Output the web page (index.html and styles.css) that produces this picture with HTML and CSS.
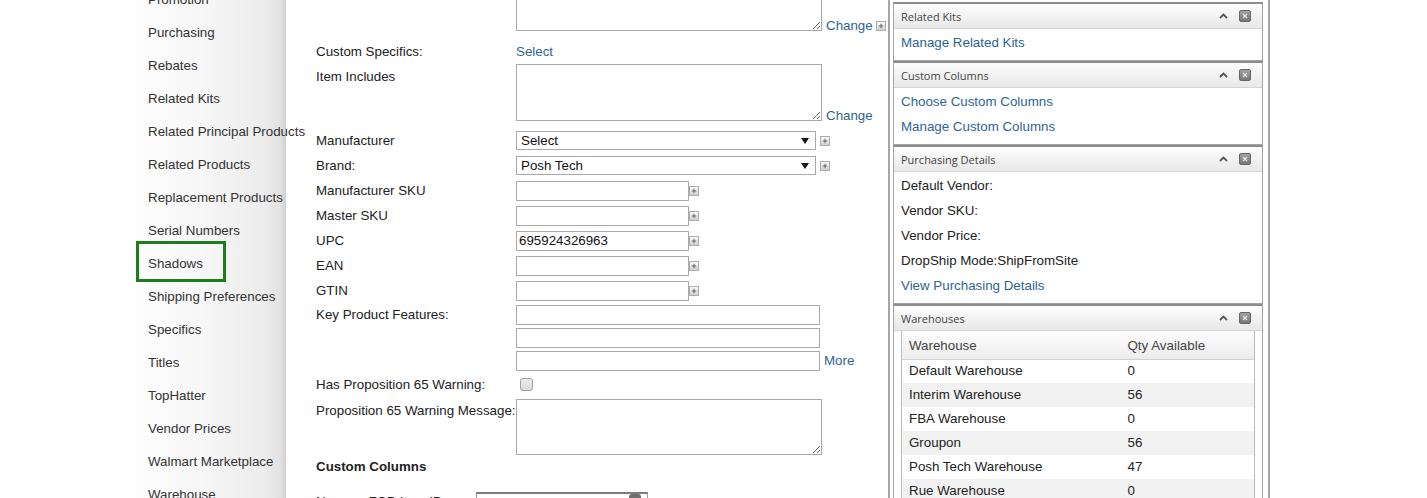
FILE: index.html
```html
<!DOCTYPE html>
<html>
<head>
<meta charset="utf-8">
<title>Product</title>
<link rel="stylesheet" href="styles.css">
</head>
<body>
<div class="page">
  <nav class="sidebar">
    <ul class="nav">
      <li><a>Promotion</a></li>
      <li><a>Purchasing</a></li>
      <li><a>Rebates</a></li>
      <li><a>Related Kits</a></li>
      <li><a>Related Principal Products</a></li>
      <li><a>Related Products</a></li>
      <li><a>Replacement Products</a></li>
      <li><a>Serial Numbers</a></li>
      <li><a class="selected">Shadows</a></li>
      <li><a>Shipping Preferences</a></li>
      <li><a>Specifics</a></li>
      <li><a>Titles</a></li>
      <li><a>TopHatter</a></li>
      <li><a>Vendor Prices</a></li>
      <li><a>Walmart Marketplace</a></li>
      <li><a>Warehouse</a></li>
    </ul>
  </nav>

  <main class="main">
    <div class="form">
      <div class="row row-ta row-first">
        <span class="label"></span>
        <textarea class="ta"></textarea>
        <a class="link chg">Change</a>
        <span class="plus plus-chg"><svg width="9" height="9" viewBox="0 0 9 9"><path d="M4.5 2v5M2 4.5h5" stroke="#555" stroke-width="1"/></svg></span>
      </div>
      <div class="row row-line">
        <span class="label">Custom Specifics:</span>
        <a class="link">Select</a>
      </div>
      <div class="row row-ta row-inc">
        <span class="label lbl-ta">Item Includes</span>
        <textarea class="ta"></textarea>
        <a class="link chg">Change</a>
      </div>
      <div class="row row-s">
        <span class="label">Manufacturer</span>
        <div class="sel"><span>Select</span><svg width="8" height="6" viewBox="0 0 8 6"><path d="M0 0h8L4 6z" fill="#111"/></svg></div>
        <span class="plus plus-sel"><svg width="9" height="9" viewBox="0 0 9 9"><path d="M4.5 2v5M2 4.5h5" stroke="#555" stroke-width="1"/></svg></span>
      </div>
      <div class="row row-s">
        <span class="label">Brand:</span>
        <div class="sel"><span>Posh Tech</span><svg width="8" height="6" viewBox="0 0 8 6"><path d="M0 0h8L4 6z" fill="#111"/></svg></div>
        <span class="plus plus-sel"><svg width="9" height="9" viewBox="0 0 9 9"><path d="M4.5 2v5M2 4.5h5" stroke="#555" stroke-width="1"/></svg></span>
      </div>
      <div class="row row-s">
        <span class="label">Manufacturer SKU</span>
        <input class="in" type="text" value="">
        <span class="plus"><svg width="9" height="9" viewBox="0 0 9 9"><path d="M4.5 2v5M2 4.5h5" stroke="#555" stroke-width="1"/></svg></span>
      </div>
      <div class="row row-s">
        <span class="label">Master SKU</span>
        <input class="in" type="text" value="">
        <span class="plus"><svg width="9" height="9" viewBox="0 0 9 9"><path d="M4.5 2v5M2 4.5h5" stroke="#555" stroke-width="1"/></svg></span>
      </div>
      <div class="row row-s">
        <span class="label">UPC</span>
        <input class="in" type="text" value="695924326963">
        <span class="plus"><svg width="9" height="9" viewBox="0 0 9 9"><path d="M4.5 2v5M2 4.5h5" stroke="#555" stroke-width="1"/></svg></span>
      </div>
      <div class="row row-s">
        <span class="label">EAN</span>
        <input class="in" type="text" value="">
        <span class="plus"><svg width="9" height="9" viewBox="0 0 9 9"><path d="M4.5 2v5M2 4.5h5" stroke="#555" stroke-width="1"/></svg></span>
      </div>
      <div class="row row-s">
        <span class="label">GTIN</span>
        <input class="in" type="text" value="">
        <span class="plus"><svg width="9" height="9" viewBox="0 0 9 9"><path d="M4.5 2v5M2 4.5h5" stroke="#555" stroke-width="1"/></svg></span>
      </div>
      <div class="row row-kf">
        <span class="label lbl-kf">Key Product Features:</span>
        <div class="stack">
          <input class="in in-wide" type="text" value="">
          <input class="in in-wide" type="text" value="">
          <input class="in in-wide" type="text" value="">
        </div>
        <a class="link more">More</a>
      </div>
      <div class="row row-cb">
        <span class="label">Has Proposition 65 Warning:</span>
        <input class="cb" type="checkbox">
      </div>
      <div class="row row-ta row-msg">
        <span class="label lbl-ta">Proposition 65 Warning Message:</span>
        <textarea class="ta ta-msg"></textarea>
      </div>
      <h3 class="heading">Custom Columns</h3>
      <div class="row row-cc">
        <span class="label lbl-cc">Newegg FOB Item ID:</span>
        <div class="combo"><span>1010000400</span><span class="combo-btn"></span></div>
      </div>
    </div>
  </main>

  <aside class="rightcol">
    <section class="panel">
      <header class="phead">
        <span class="ptitle">Related Kits</span>
        <svg class="caret" width="9" height="6" viewBox="0 0 9 6"><path d="M1 5L4.5 1.5L8 5" fill="none" stroke="#555" stroke-width="1.8"/></svg>
        <span class="close"><svg width="10" height="10" viewBox="0 0 10 10"><path d="M3 3l4 4M7 3l-4 4" stroke="#e6e6e6" stroke-width="1.2"/></svg></span>
      </header>
      <div class="pbody">
        <a class="link pline">Manage Related Kits</a>
      </div>
    </section>
    <section class="panel">
      <header class="phead">
        <span class="ptitle">Custom Columns</span>
        <svg class="caret" width="9" height="6" viewBox="0 0 9 6"><path d="M1 5L4.5 1.5L8 5" fill="none" stroke="#555" stroke-width="1.8"/></svg>
        <span class="close"><svg width="10" height="10" viewBox="0 0 10 10"><path d="M3 3l4 4M7 3l-4 4" stroke="#e6e6e6" stroke-width="1.2"/></svg></span>
      </header>
      <div class="pbody">
        <a class="link pline">Choose Custom Columns</a>
        <a class="link pline">Manage Custom Columns</a>
      </div>
    </section>
    <section class="panel">
      <header class="phead">
        <span class="ptitle">Purchasing Details</span>
        <svg class="caret" width="9" height="6" viewBox="0 0 9 6"><path d="M1 5L4.5 1.5L8 5" fill="none" stroke="#555" stroke-width="1.8"/></svg>
        <span class="close"><svg width="10" height="10" viewBox="0 0 10 10"><path d="M3 3l4 4M7 3l-4 4" stroke="#e6e6e6" stroke-width="1.2"/></svg></span>
      </header>
      <div class="pbody">
        <div class="pline">Default Vendor:</div>
        <div class="pline">Vendor SKU:</div>
        <div class="pline">Vendor Price:</div>
        <div class="pline">DropShip Mode:ShipFromSite</div>
        <a class="link pline">View Purchasing Details</a>
      </div>
    </section>
    <section class="panel">
      <header class="phead">
        <span class="ptitle">Warehouses</span>
        <svg class="caret" width="9" height="6" viewBox="0 0 9 6"><path d="M1 5L4.5 1.5L8 5" fill="none" stroke="#555" stroke-width="1.8"/></svg>
        <span class="close"><svg width="10" height="10" viewBox="0 0 10 10"><path d="M3 3l4 4M7 3l-4 4" stroke="#e6e6e6" stroke-width="1.2"/></svg></span>
      </header>
      <div class="pbody pbody-table">
        <table class="wh">
          <colgroup><col class="c1"><col></colgroup>
          <thead><tr><th>Warehouse</th><th>Qty Available</th></tr></thead>
          <tbody>
            <tr><td>Default Warehouse</td><td>0</td></tr>
            <tr><td>Interim Warehouse</td><td>56</td></tr>
            <tr><td>FBA Warehouse</td><td>0</td></tr>
            <tr><td>Groupon</td><td>56</td></tr>
            <tr><td>Posh Tech Warehouse</td><td>47</td></tr>
            <tr><td>Rue Warehouse</td><td>0</td></tr>
          </tbody>
        </table>
      </div>
    </section>
  </aside>
</div>
</body>
</html>
```

FILE: styles.css
```css
* { box-sizing: border-box; }
html, body { margin: 0; padding: 0; }
body {
  width: 1427px;
  height: 498px;
  overflow: hidden;
  background: #fff;
  font-family: "Liberation Sans", Arial, sans-serif;
  font-size: 13.33px;
  color: #222;
}
.page { display: flex; height: 498px; overflow: hidden; }

/* sidebar */
.sidebar {
  width: 286px;
  flex: none;
  position: relative;
  z-index: 1;
  background: linear-gradient(to right, #fff 0, #fff 120px, #f7f7f7 200px, #ededed 262px, #e2e2e2 280px, #d0d0d0 286px);
}
.nav { list-style: none; margin: -17px 0 0; padding: 0 0 0 139px; }
.nav li { height: 33px; line-height: 33px; white-space: nowrap; }
.nav a { display: inline-block; padding: 0 9px; color: #333; text-decoration: none; vertical-align: top; }
.nav a.selected {
  width: 84px;
  height: 35px;
  margin-top: -3px;
  padding-top: 3px;
  line-height: 33px;
  outline: 3px solid #1b7d1b;
}

/* main form */
.main {
  width: 604px;
  flex: none;
  border-right: 2px solid #a6a6a6;
  background: #fff;
  padding-left: 30px;
  overflow: hidden;
}
.form { margin-top: -26px; }
.row { display: flex; align-items: center; }
.label { width: 200px; flex: none; line-height: 20px; white-space: nowrap; color: #222; }
.link { color: #2f6496; text-decoration: none; cursor: pointer; }

.row-ta { align-items: flex-start; }
.row-first { margin-bottom: 11px; }
.row-line { height: 20px; line-height: 20px; margin-bottom: 2px; }
.row-inc { margin-bottom: 7px; }
.lbl-ta { padding-top: 2px; }
.row-inc .lbl-ta { padding-top: 3px; }
.ta {
  display: block;
  width: 306px;
  height: 57px;
  margin: 0;
  padding: 2px;
  border: 1px solid #a9a9a9;
  font: inherit;
  resize: both;
  background: #fff;
}
.chg { align-self: flex-end; margin-left: 4px; line-height: 16px; margin-bottom: -3px; }

.plus {
  display: inline-flex;
  align-items: center;
  justify-content: center;
  width: 10px;
  height: 10px;
  flex: none;
  border: 1px solid #adadad;
  background: linear-gradient(#fbfbfb, #cfcfcf);
}
.plus svg { display: block; width: 8px; height: 8px; }
.plus-chg { align-self: flex-end; margin-left: 3px; margin-bottom: 0; }
.plus-sel { margin-left: 4px; }

.row-s { height: 25px; }
.sel {
  width: 300px;
  height: 19px;
  border: 1px solid #a9a9a9;
  display: flex;
  align-items: center;
  justify-content: space-between;
  padding: 0 6px 0 4px;
  color: #111;
  background: #fff;
}
.sel svg { display: block; }
.in {
  width: 173px;
  height: 20px;
  margin: 0;
  padding: 0 2px;
  border: 1px solid #a9a9a9;
  font: inherit;
  color: #111;
  background: #fff;
  outline: none;
}

.row-kf { align-items: flex-start; }
.lbl-kf { margin-top: 2px; }
.stack { display: flex; flex-direction: column; gap: 3px; margin-top: 2px; }
.in-wide { width: 304px; }
.more { align-self: flex-end; margin-left: 4px; line-height: 20px; }

.row-cb { height: 25px; margin-top: 1px; }
.cb {
  -webkit-appearance: none;
  appearance: none;
  width: 13px;
  height: 13px;
  margin: -1px 0 0 4px;
  border: 1px solid #a3a3a3;
  border-radius: 3px;
  background: linear-gradient(#ececec, #d9d9d9);
}

.row-msg { margin-top: 2px; }
.ta-msg { height: 56px; }

.heading { margin: 2px 0 0; font-size: 13.33px; font-weight: bold; line-height: 20px; color: #222; }

.row-cc { margin-top: 15px; align-items: flex-start; }
.lbl-cc { width: 160px; }
.combo {
  width: 172px;
  height: 22px;
  border: 1px solid #9a9a9a;
  border-top: 2px solid #7d7d7d;
  display: flex;
  justify-content: space-between;
  padding: 0 6px 0 3px;
  line-height: 18px;
  color: #111;
}
.combo-btn { width: 12px; height: 14px; border-radius: 3px; background: #6f6f6f; }

/* right column */
.rightcol {
  width: 380px;
  flex: none;
  padding: 2px 5px 0 3px;
  border-right: 2px solid #a6a6a6;
  background: #fff;
}
.panel {
  border: 1px solid #a3a3a3;
  border-top: 2px solid #8d8d8d;
  background: #fff;
}
.phead {
  height: 25px;
  display: flex;
  align-items: center;
  padding: 0 11px 0 7px;
  border-bottom: 1px solid #d6d6d6;
  background: linear-gradient(#fdfdfd, #e8e8e8);
  font-family: "Open Sans", "Liberation Sans", sans-serif;
  font-size: 11px;
  color: #444;
}
.ptitle { flex: 1; }
.caret { display: block; margin-right: 11px; margin-top: -1px; }
.close {
  width: 12px;
  height: 12px;
  border: 1px solid #666;
  border-radius: 2px;
  background: linear-gradient(#a2a2a2, #777);
  display: flex;
  align-items: center;
  justify-content: center;
}
.close svg { display: block; }
.pbody { padding: 1px 7px 5px; line-height: 25px; }
.pline { display: block; color: #222; }
a.pline { color: #2f6496; }
.pbody-table { padding: 0 7px; line-height: 16px; }

.wh {
  width: 354px;
  border-collapse: collapse;
  border-left: 1px solid #b9b9b9;
  border-right: 1px solid #b9b9b9;
  font-size: 13.33px;
  line-height: 16px;
}
.wh col.c1 { width: 219px; }
.wh th {
  height: 28px;
  padding: 2px 0 0 7px;
  text-align: left;
  font-weight: normal;
  color: #444;
  background: linear-gradient(#fdfdfd, #ececec);
  border-bottom: 1px solid #cfcfcf;
}
.wh td { height: 24px; padding: 0 0 0 7px; color: #222; }
.wh tbody tr:nth-child(even) td { background: #f2f2f2; }
```
